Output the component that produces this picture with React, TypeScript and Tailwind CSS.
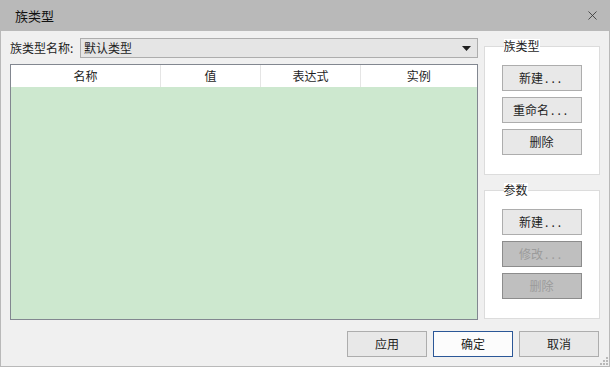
import { X } from 'lucide-react'

const font = { fontFamily: '"Noto Sans CJK SC", "Noto Sans", sans-serif' }

const Dots = () => <span className="ml-[2px] tracking-[3px]">...</span>

type BtnProps = { label: string; dots?: boolean; disabled?: boolean; primary?: boolean }

const Btn = ({ label, dots, disabled, primary }: BtnProps) => (
  <button
    className={
      'flex h-[26px] w-[80px] items-center justify-center border text-[12px] leading-none ' +
      (disabled
        ? 'border-[#8c8c8c] bg-[#bfbfbf] text-[#9b9b9b]'
        : primary
          ? 'border-[#2b5797] bg-[#fcfcfc] text-[#1e1e1e]'
          : 'border-[#adadad] bg-[#e8e8e8] text-[#1e1e1e]')
    }
  >
    {label}
    {dots && <Dots />}
  </button>
)

const Group = ({ title, children }: { title: string; children: React.ReactNode }) => (
  <fieldset className="border border-[#dcdcdc] bg-white px-[17px] pt-[12px] pb-[19px]">
    <legend className="ml-[2px] bg-white px-0 text-[12px] leading-[14px] text-[#1e1e1e]">
      {title}
    </legend>
    <div className="flex flex-col gap-[6px]">{children}</div>
  </fieldset>
)

export default function App() {
  return (
    <div style={font} className="flex h-[367px] w-[610px] flex-col bg-[#f0f0f0] text-[#1e1e1e]">
      {/* title bar */}
      <header className="flex h-[31px] shrink-0 items-center justify-between bg-[#b9b9b9] pr-[10px] pl-[15px]">
        <span className="text-[13px] text-[#111]">族类型</span>
        <X className="h-[15px] w-[15px] text-[#333]" strokeWidth={1.3} />
      </header>

      <div className="relative flex flex-1 flex-col border-x border-b border-[#b9b9b9] px-[9px] pt-[7px] pb-[9px]">
        <div className="flex gap-[6px]">
          {/* left column */}
          <div className="flex w-[470px] flex-col">
            <div className="flex h-[20px] items-center">
              <span className="w-[70px] text-[12px]">族类型名称:</span>
              <div className="flex h-[20px] flex-1 items-center justify-between border border-[#adadad] bg-[#e5e5e5] pr-[6px] pl-[3px] text-[12px]">
                <span>默认类型</span>
                <svg width="9" height="5" viewBox="0 0 9 5">
                  <path d="M0 0h9L4.5 5z" fill="#1e1e1e" />
                </svg>
              </div>
            </div>
            <div className="mt-[6px] flex h-[256px] flex-col border border-[#828790] bg-[#cde8cf]">
              <div className="grid h-[22px] grid-cols-[150px_100px_100px_1fr] bg-white text-[12px]">
                <div className="flex items-center justify-center border-r border-[#e5e5e5]">名称</div>
                <div className="flex items-center justify-center border-r border-[#e5e5e5]">值</div>
                <div className="flex items-center justify-center border-r border-[#e5e5e5]">表达式</div>
                <div className="flex items-center justify-center">实例</div>
              </div>
            </div>
          </div>

          {/* right column */}
          <div className="flex w-[117px] flex-col gap-[8px] pt-[1px]">
            <Group title="族类型">
              <Btn label="新建" dots />
              <Btn label="重命名" dots />
              <Btn label="删除" />
            </Group>
            <Group title="参数">
              <Btn label="新建" dots />
              <Btn label="修改" dots disabled />
              <Btn label="删除" disabled />
            </Group>
          </div>
        </div>

        {/* bottom buttons */}
        <div className="mt-auto flex justify-end gap-[6px] pr-[1px]">
          <Btn label="应用" />
          <Btn label="确定" primary />
          <Btn label="取消" />
        </div>

        {/* resize grip */}
        <svg className="absolute right-[1px] bottom-[1px]" width="9" height="9" viewBox="0 0 9 9">
          <g fill="#b9b9b9">
            <rect x="7" y="1" width="2" height="2" />
            <rect x="4" y="4" width="2" height="2" />
            <rect x="7" y="4" width="2" height="2" />
            <rect x="1" y="7" width="2" height="2" />
            <rect x="4" y="7" width="2" height="2" />
            <rect x="7" y="7" width="2" height="2" />
          </g>
        </svg>
      </div>
    </div>
  )
}
